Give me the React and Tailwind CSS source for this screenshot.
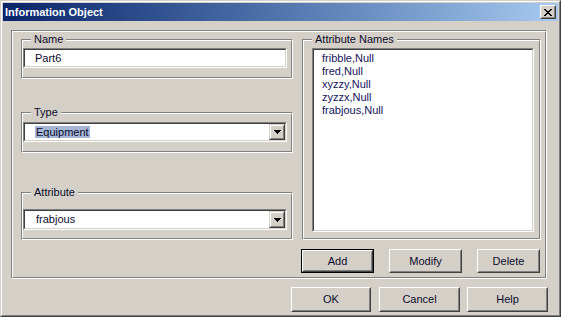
const FACE = 'bg-[#d4d0c8]'

function Group({ label, className = '', innerClassName = '', children }) {
  return (
    <div className={`relative border border-t-[#808080] border-l-[#808080] border-b-white border-r-white ${className}`}>
      <div className={`h-full border border-t-white border-l-white border-b-[#808080] border-r-[#808080] ${innerClassName}`}>
        {children}
      </div>
      {label && (
        <span className={`absolute left-[9px] top-[-7px] ${FACE} px-[3px] leading-[13px]`}>{label}</span>
      )}
    </div>
  )
}

function Sunken({ className = '', children }) {
  return (
    <div className={`border border-t-[#808080] border-l-[#808080] border-b-white border-r-white ${className}`}>
      <div className="h-full border border-t-[#404040] border-l-[#404040] border-b-[#d4d0c8] border-r-[#d4d0c8] bg-white flex items-center">
        {children}
      </div>
    </div>
  )
}

function Button({ className = '', isDefault, children }) {
  const body = (
    <div className="h-full border border-t-white border-l-white border-b-[#404040] border-r-[#404040]">
      <div className="h-full border border-t-[#d4d0c8] border-l-[#d4d0c8] border-b-[#808080] border-r-[#808080] flex items-center justify-center">
        {children}
      </div>
    </div>
  )
  if (isDefault) {
    return <div className={`border border-black ${className}`}>{body}</div>
  }
  return <div className={className}>{body}</div>
}

function DropArrow() {
  return (
    <div className="w-[16px] h-full border border-t-[#d4d0c8] border-l-[#d4d0c8] border-b-[#404040] border-r-[#404040] bg-[#d4d0c8]">
      <div className="h-full border border-t-white border-l-white border-b-[#808080] border-r-[#808080] flex items-center justify-center">
        <svg width="7" height="4" viewBox="0 0 7 4" shapeRendering="crispEdges">
          <rect x="0" y="0" width="7" height="1" fill="#000" />
          <rect x="1" y="1" width="5" height="1" fill="#000" />
          <rect x="2" y="2" width="3" height="1" fill="#000" />
          <rect x="3" y="3" width="1" height="1" fill="#000" />
        </svg>
      </div>
    </div>
  )
}

function Combo({ className = '', children }) {
  return (
    <Sunken className={className}>
      <div className="flex-1 pl-[10px]">{children}</div>
      <DropArrow />
    </Sunken>
  )
}

function CloseGlyph() {
  const rows = [
    [0, 1, 6, 7],
    [1, 2, 5, 6],
    [2, 3, 4, 5],
    [3, 4],
    [2, 3, 4, 5],
    [1, 2, 5, 6],
    [0, 1, 6, 7],
  ]
  return (
    <svg width="8" height="7" viewBox="0 0 8 7" shapeRendering="crispEdges">
      {rows.map((cols, y) =>
        cols.map((x) => <rect key={`${x}-${y}`} x={x} y={y} width="1" height="1" fill="#000" />)
      )}
    </svg>
  )
}

const attributes = ['fribble,Null', 'fred,Null', 'xyzzy,Null', 'zyzzx,Null', 'frabjous,Null']

export default function App() {
  return (
    <div
      className={`w-[561px] h-[317px] ${FACE} border border-t-[#d4d0c8] border-l-[#d4d0c8] border-b-[#404040] border-r-[#404040] text-[11px] text-[#0c0c2c] overflow-hidden`}
      style={{ fontFamily: '"Liberation Sans", Arial, sans-serif' }}
    >
      <div className="h-full border border-t-white border-l-white border-b-[#808080] border-r-[#808080] p-px flex flex-col">
        {/* Title bar */}
        <div className="h-[18px] bg-linear-to-r from-[#0a246a] to-[#a6caf0] flex items-center justify-between pl-[2px] pr-[2px]">
          <span className="text-white font-bold text-[11px] leading-[18px]">Information Object</span>
          <Button className="w-[16px] h-[14px] bg-[#d4d0c8]">
            <CloseGlyph />
          </Button>
        </div>

        {/* Main frame */}
        <div className="ml-[8px] mt-[9px] w-[536px] h-[249px]">
          <Group className="h-full" innerClassName="pl-[8px] pt-[7px]">
            <div className="flex">
              {/* Left column */}
              <div className="w-[272px] flex flex-col">
                <Group label="Name" className="h-[40px]" innerClassName="pt-[7px]">
                  <Sunken className="w-[264px] h-[20px]">
                    <span className="pl-[10px]">Part6</span>
                  </Sunken>
                </Group>
                <Group label="Type" className="h-[41px] mt-[33px]" innerClassName="pt-[8px]">
                  <Combo className="w-[264px] h-[20px]">
                    <span className="bg-[#a6b6d6] px-px">Equipment</span>
                  </Combo>
                </Group>
                <Group label="Attribute" className="h-[48px] mt-[39px]" innerClassName="pt-[15px]">
                  <Combo className="w-[264px] h-[21px]">
                    <span className="px-px">frabjous</span>
                  </Combo>
                </Group>
              </div>

              {/* Right column */}
              <div className="ml-[9px] w-[239px] flex flex-col">
                <Group label="Attribute Names" className="h-[201px]" innerClassName="pl-[8px] pt-[7px]">
                  <div className="w-[222px] h-[184px] border border-t-[#808080] border-l-[#808080] border-b-white border-r-white">
                    <div className="h-full border border-t-[#404040] border-l-[#404040] border-b-[#d4d0c8] border-r-[#d4d0c8] bg-white pl-[8px] pt-[2px]">
                      {attributes.map((a) => (
                        <div key={a} className="leading-[13px] text-[#14145a]">
                          {a}
                        </div>
                      ))}
                    </div>
                  </div>
                </Group>
                <div className="flex mt-[9px] -ml-px">
                  <Button isDefault className="w-[73px] h-[24px]">Add</Button>
                  <Button className="w-[73px] h-[24px] ml-[15px]">Modify</Button>
                  <Button className="w-[63px] h-[24px] ml-[15px]">Delete</Button>
                </div>
              </div>
            </div>
          </Group>
        </div>

        {/* Bottom buttons */}
        <div className="flex mt-[8px] ml-[288px]">
          <Button className="w-[80px] h-[25px]">OK</Button>
          <Button className="w-[81px] h-[25px] ml-[8px]">Cancel</Button>
          <Button className="w-[81px] h-[25px] ml-[7px]">Help</Button>
        </div>
      </div>
    </div>
  )
}
